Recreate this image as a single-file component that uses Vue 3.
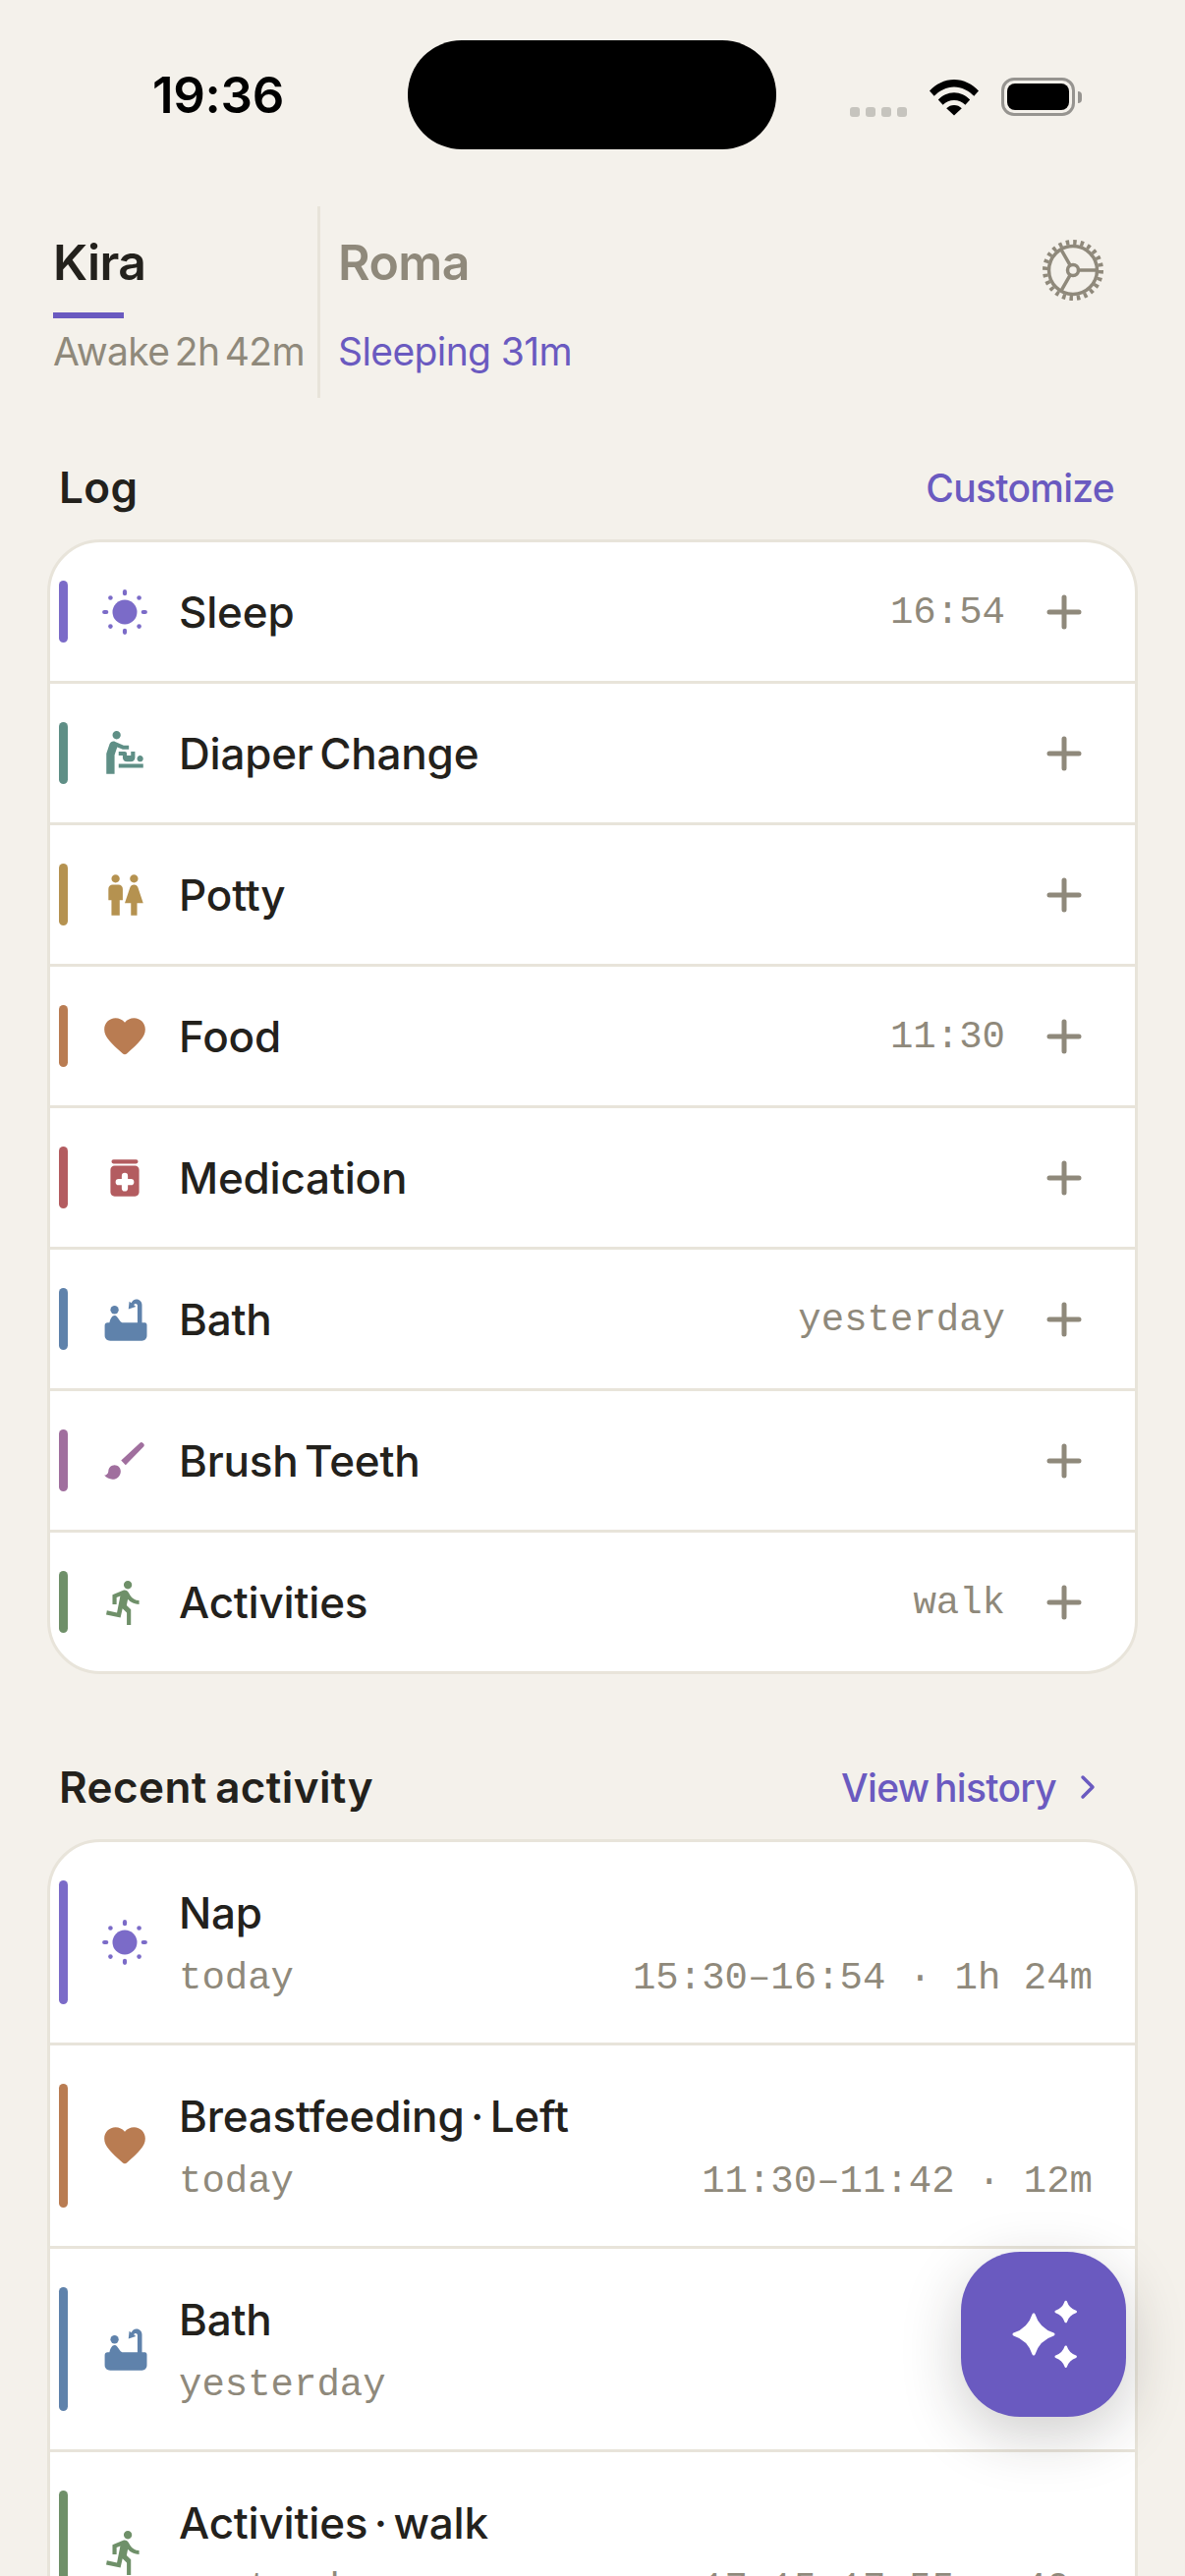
<template>
  <div class="phone">
    <div class="status">
      <span class="clock">19:36</span>
      <div class="island"></div>
      <div class="status-right">
        <div class="signal"><i v-for="n in 4" :key="n"></i></div>
        <svg class="wifi" width="52" height="38" viewBox="0 0 52 38">
          <path d="M1 12.500C7.500 5.600 16.200 1 26 1s18.500 4.600 25 11.500l-4.700 5.300C41 12.300 33.900 8.400 26 8.400S11 12.300 5.700 17.800z" />
          <path d="M9.800 21.500C14 17.200 19.700 14.300 26 14.300s12 2.900 16.200 7.200l-4.800 5.300C34.400 23.900 30.400 22 26 22s-8.400 1.900-11.400 4.800z" />
          <path d="M18.200 30.300C20.300 28.200 23 27 26 27s5.700 1.200 7.800 3.300L26 37.500z" />
        </svg>
        <div class="battery"><div class="battery-fill"></div></div>
        <div class="battery-nub"></div>
      </div>
    </div>

    <div class="tabs">
      <div class="tab tab-active">
        <div class="tab-name">Kira</div>
        <div class="tab-line"></div>
        <div class="tab-sub">Awake 2h 42m</div>
      </div>
      <div class="tab tab-other">
        <div class="tab-name">Roma</div>
        <div class="tab-gap"></div>
        <div class="tab-sub">Sleeping 31m</div>
      </div>
      <svg class="gear" width="64" height="64" viewBox="0 0 64 64" fill="none" stroke="#8f897b">
        <circle cx="32" cy="32" r="28.500" stroke-width="5" stroke-dasharray="3.500 3.960" />
        <circle cx="32" cy="32" r="24.500" stroke-width="3.500" />
        <circle cx="32" cy="32" r="5.500" stroke-width="3.500" />
        <path d="M37.500 32H56M29.200 27.200L20 11.200M29.200 36.800L20 52.800" stroke-width="3.500" />
      </svg>
    </div>

    <div class="section-head log-head">
      <h2>Log</h2>
      <span class="link">Customize</span>
    </div>
    <div class="card">
      <div v-for="item in logItems" :key="item.name" class="row">
        <div class="accent" :style="{ background: item.color }"></div>
        <svg class="icon" width="50" height="50" viewBox="0 0 24 24" :fill="item.color" v-html="icons[item.icon]"></svg>
        <span class="name">{{ item.name }}</span>
        <span class="last">{{ item.last }}</span>
        <svg class="plus" width="36" height="36" viewBox="0 0 36 36" fill="none" stroke="#8f897b" stroke-width="5" stroke-linecap="round">
          <path d="M18 3v30M3 18h30" />
        </svg>
      </div>
    </div>

    <div class="section-head recent-head">
      <h2>Recent activity</h2>
      <span class="link">View history
        <svg class="chevron" width="18" height="26" viewBox="0 0 18 26" fill="none" stroke="#6a5ac0" stroke-width="3.500" stroke-linecap="round" stroke-linejoin="round">
          <path d="M4 3l10 10L4 23" />
        </svg>
      </span>
    </div>
    <div class="card">
      <div v-for="item in recentItems" :key="item.title" class="row row-tall">
        <div class="accent accent-tall" :style="{ background: item.color }"></div>
        <svg class="icon" width="50" height="50" viewBox="0 0 24 24" :fill="item.color" v-html="icons[item.icon]"></svg>
        <div class="recent-body">
          <div class="name">{{ item.title }}</div>
          <div class="recent-sub">
            <span>{{ item.day }}</span>
            <span>{{ item.time }}</span>
          </div>
        </div>
      </div>
    </div>

    <button class="fab">
      <svg width="168" height="168" viewBox="0 0 168 168" fill="#fff" stroke="#fff" stroke-linejoin="round">
        <path :d="star(74, 84, 20)" stroke-width="3" />
        <path :d="star(106.700, 61, 10)" stroke-width="2.500" />
        <path :d="star(106.700, 106.700, 10)" stroke-width="2.500" />
      </svg>
    </button>
  </div>
</template>

<script setup>
const icons = {
  sun: '<circle cx="12" cy="12" r="6"/><rect x="11" y="1" width="2" height="3" rx="1"/><rect x="11" y="20" width="2" height="3" rx="1"/><rect x="1" y="11" width="3" height="2" rx="1"/><rect x="20" y="11" width="3" height="2" rx="1"/><circle cx="5" cy="5" r="1.100"/><circle cx="19" cy="5" r="1.100"/><circle cx="5" cy="19" r="1.100"/><circle cx="19" cy="19" r="1.100"/>',
  baby: '<path d="M14 8v2h-3L8.310 8.820 7 12.750V22H3V12l1.580-4.630C4.960 6.250 6.220 5.690 7.300 6.180l4.150 1.830L14 8zM8 1C6.900 1 6 1.900 6 3s.9 2 2 2 2-.9 2-2-.9-2-2-2zm1 18h12v-2H9v2zm10.500-3c.83 0 1.500-.67 1.500-1.500s-.67-1.500-1.500-1.500-1.500.67-1.500 1.500.67 1.500 1.500 1.500zM13 12c0-.55-.45-1-1-1H9v2h2v1c0 1.100.9 2 2 2h2c1.100 0 2-.9 2-2v-3h-2v2h-2v-2z"/>',
  wc: '<path d="M5.500 22v-7.500H4V9c0-1.100.9-2 2-2h3c1.100 0 2 .9 2 2v5.500H9.500V22h-4zM18 22v-6h3l-2.540-7.630C18.180 7.550 17.420 7 16.560 7h-.12c-.86 0-1.630.55-1.900 1.370L12 16h3v6h3zM7.500 6c1.110 0 2-.89 2-2s-.89-2-2-2-2 .89-2 2 .89 2 2 2zm9 0c1.110 0 2-.89 2-2s-.89-2-2-2-2 .89-2 2 .89 2 2 2z"/>',
  heart: '<path d="M12 20.800c-.4 0-.8-.2-1.100-.5C5.400 15.300 2 12.300 2 8.500 2 5.400 4.400 3 7.500 3c1.700 0 3.400.8 4.500 2.100C13.100 3.800 14.800 3 16.500 3 19.600 3 22 5.400 22 8.500c0 3.800-3.400 6.800-8.900 11.800-.3.300-.7.500-1.100.5z"/>',
  med: '<path fill-rule="evenodd" d="M6.500 3h11a1 1 0 0 1 0 2h-11a1 1 0 0 1 0-2zM7 6h10c1.100 0 2 .9 2 2v11c0 1.100-.9 2-2 2H7c-1.100 0-2-.9-2-2V8c0-1.100.9-2 2-2zm3.500 5v1.500H9a1.500 1.500 0 0 0 0 3h1.500V17a1.500 1.500 0 0 0 3 0v-1.500H15a1.500 1.500 0 0 0 0-3h-1.500V11a1.500 1.500 0 0 0-3 0z"/>',
  bath: '<circle cx="7" cy="7.300" r="2"/><path d="M2.200 15c0-.8.600-1.400 1.400-1.400h.9c.4-1.800 1.300-3.500 2.500-3.500 1 0 1.600 1 2.400 2.300.3.500.7.900 1.300 1.200h7.500V5.200c0-.5-.4-.9-.9-.9s-.7.300-.9.600l1 .8-3.600 1.200.4-3.700 1 .7c.5-.9 1.300-1.700 2.500-1.700 1.500 0 2.700 1.200 2.700 2.800v8.600h1.500c.5 0 .9.500.9 1.100v5.100c0 1.500-1 2.600-2.400 2.600H4.900c-1.600 0-2.700-1.100-2.700-2.600z"/>',
  brush: '<path d="M7 14c-1.660 0-3 1.340-3 3 0 1.310-1.160 2-2 2 .92 1.220 2.490 2 4 2 2.210 0 4-1.790 4-4 0-1.660-1.340-3-3-3z"/><path d="M19.400 3.200c.4-.4 1-.4 1.400 0l.4.4c.4.400.4 1 0 1.400L12.400 14l-2.200-2.200z"/>',
  run: '<path d="M13.490 5.480c1.100 0 2-.9 2-2s-.9-2-2-2-2 .9-2 2 .9 2 2 2zm-3.600 13.900l1-4.400 2.100 2v6h2v-7.500l-2.100-2 .6-3c1.300 1.500 3.300 2.500 5.500 2.500v-2c-1.900 0-3.500-1-4.300-2.400l-1-1.600c-.4-.6-1-1-1.700-1-.3 0-.5.1-.8.1l-5.200 2.200v4.700h2v-3.400l1.800-.7-1.600 8.100-4.900-1-.4 2 7 1.400z"/>',
}

const logItems = [
  { name: 'Sleep', icon: 'sun', color: '#7b6bc8', last: '16:54' },
  { name: 'Diaper Change', icon: 'baby', color: '#5f8f86', last: '' },
  { name: 'Potty', icon: 'wc', color: '#b59250', last: '' },
  { name: 'Food', icon: 'heart', color: '#b97c52', last: '11:30' },
  { name: 'Medication', icon: 'med', color: '#b35c60', last: '' },
  { name: 'Bath', icon: 'bath', color: '#5f82ab', last: 'yesterday' },
  { name: 'Brush Teeth', icon: 'brush', color: '#a06f9e', last: '' },
  { name: 'Activities', icon: 'run', color: '#6f9069', last: 'walk' },
]

const recentItems = [
  { title: 'Nap', icon: 'sun', color: '#7b6bc8', day: 'today', time: '15:30–16:54 · 1h 24m' },
  { title: 'Breastfeeding · Left', icon: 'heart', color: '#b97c52', day: 'today', time: '11:30–11:42 · 12m' },
  { title: 'Bath', icon: 'bath', color: '#5f82ab', day: 'yesterday', time: '' },
  { title: 'Activities · walk', icon: 'run', color: '#6f9069', day: 'yesterday', time: '17:15–17:55 · 40m' },
]

// four pointed sparkle, concave sides
const star = (x, y, r) => {
  const c = r * 0.24
  return `M${x} ${y - r}Q${x + c} ${y - c} ${x + r} ${y}Q${x + c} ${y + c} ${x} ${y + r}Q${x - c} ${y + c} ${x - r} ${y}Q${x - c} ${y - c} ${x} ${y - r}Z`
}
</script>

<style>
html,
body {
  margin: 0;
  background: #f4f1eb;
}
</style>

<style scoped>
.phone {
  position: relative;
  width: 1206px;
  height: 2622px;
  overflow: hidden;
  background: #f4f1eb;
  color: #23211c;
  font-family: Inter, "Liberation Sans", sans-serif;
}

.status {
  display: grid;
  grid-template-columns: 415px 375px 1fr;
  align-items: center;
  height: 111px;
  padding-top: 41px;
}

.clock {
  padding-left: 155px;
  font-size: 51px;
  font-weight: 600;
  color: #000;
  letter-spacing: -0.3px;
}

.island {
  height: 111px;
  border-radius: 55px;
  background: #000;
}

.status-right {
  display: flex;
  align-items: center;
  height: 40px;
  margin-top: 4px;
  padding-left: 75px;
}

.signal {
  display: flex;
  gap: 6px;
  align-self: flex-end;
  margin-right: 22px;
}

.signal i {
  width: 10px;
  height: 10px;
  border-radius: 3px;
  background: #c6c4be;
}

.wifi {
  margin-right: 22px;
}

.battery {
  box-sizing: border-box;
  width: 75px;
  height: 39px;
  padding: 3px;
  border: 3px solid #969490;
  border-radius: 13px;
}

.battery-fill {
  height: 100%;
  border-radius: 8px;
  background: #000;
}

.battery-nub {
  width: 4px;
  height: 12px;
  margin-left: 3px;
  border-radius: 0 4px 4px 0;
  background: #969490;
}

.tabs {
  display: flex;
  height: 195px;
  margin-top: 58px;
  padding: 0 82px 0 54px;
}

.tab {
  display: flex;
  flex-direction: column;
}

.tab-active {
  width: 269px;
  border-right: 3px solid #e8e4da;
}

.tab-other {
  padding-left: 18px;
}

.tab-name {
  margin-top: 27px;
  font-size: 50px;
  line-height: 60px;
  font-weight: 600;
  letter-spacing: -0.6px;
}

.tab-other .tab-name {
  color: #8f897b;
}

.tab-line {
  width: 72px;
  height: 6px;
  margin-top: 21px;
  background: #6a5ac0;
}

.tab-gap {
  height: 6px;
  margin-top: 21px;
}

.tab-sub {
  margin-top: 10px;
  font-size: 39px;
  line-height: 48px;
  color: #8f897b;
  letter-spacing: -0.6px;
  white-space: nowrap;
}

.tab-active .tab-sub {
  word-spacing: -5px;
}

.tab-other .tab-sub {
  color: #6a5ac0;
}

.gear {
  margin: 33px 0 0 auto;
}

.section-head {
  display: flex;
  justify-content: space-between;
  align-items: center;
  height: 60px;
  padding: 0 72px 0 60px;
}

.log-head {
  margin-top: 61px;
  margin-bottom: 23px;
}

.recent-head {
  margin-top: 85px;
  margin-bottom: 23px;
}

h2 {
  margin: 0;
  font-size: 44px;
  font-weight: 600;
  letter-spacing: 0.4px;
  word-spacing: -3px;
}

.link {
  display: flex;
  align-items: center;
  font-size: 39px;
  font-weight: 500;
  color: #6a5ac0;
  letter-spacing: -0.7px;
  word-spacing: -4px;
}

.chevron {
  margin: 0 18px 0 23px;
}

.card {
  width: 1104px;
  margin-left: 48px;
  border: 3px solid #e8e4da;
  border-radius: 54px;
  background: #fff;
}

.row {
  display: flex;
  align-items: center;
  height: 141px;
  padding: 0 54px 0 9px;
}

.row + .row {
  border-top: 3px solid #e8e4da;
}

.row-tall {
  height: 204px;
  padding-right: 43px;
}

.accent {
  flex: none;
  width: 9px;
  height: 63px;
  border-radius: 5px;
}

.accent-tall {
  height: 126px;
}

.icon {
  flex: none;
  margin: 0 30px 0 33px;
}

.name {
  flex: 1;
  font-size: 44px;
  line-height: 56px;
  font-weight: 450;
  letter-spacing: -0.2px;
  word-spacing: -5px;
}

.last {
  margin-right: 42px;
  padding-top: 3px;
  font-family: "Liberation Mono", monospace;
  font-size: 39px;
  color: #8f897b;
}

.recent-body {
  flex: 1;
  margin-top: 3.500px;
}

.recent-sub {
  display: flex;
  justify-content: space-between;
  margin-top: 14.500px;
  font-family: "Liberation Mono", monospace;
  font-size: 39px;
  line-height: 50px;
  color: #8f897b;
}

.fab {
  position: absolute;
  left: 978px;
  top: 2292px;
  width: 168px;
  height: 168px;
  padding: 0;
  border: 0;
  border-radius: 60px;
  background: #6a5ac0;
  box-shadow: 0 18px 60px rgba(35, 33, 28, 0.22);
}

.fab svg {
  display: block;
}
</style>
